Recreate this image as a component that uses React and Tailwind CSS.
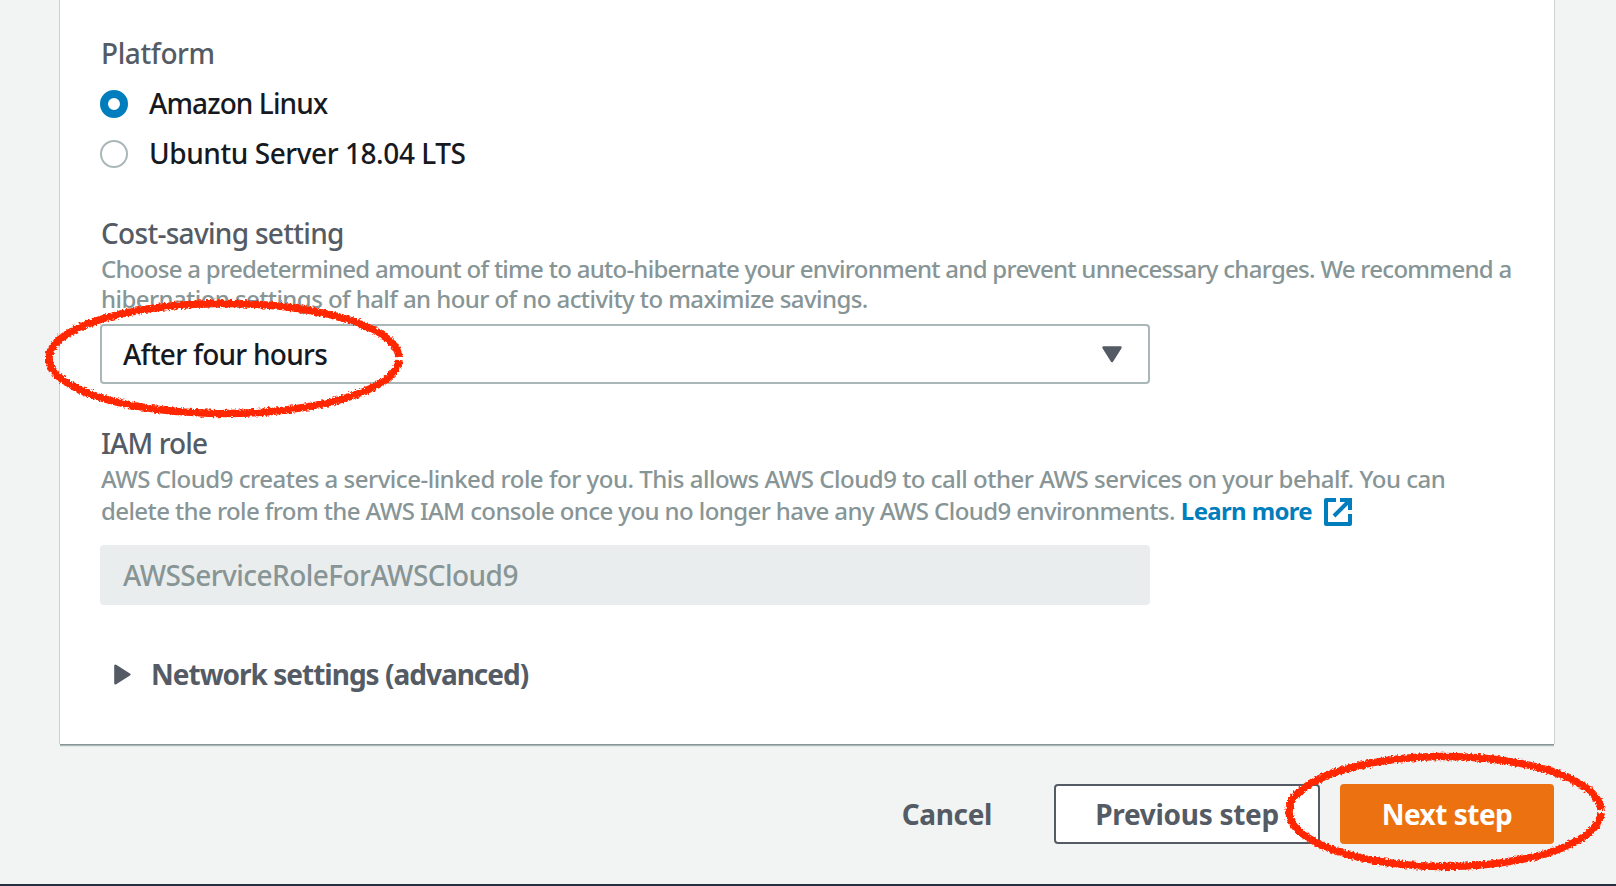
function Annotation({ className, w, h, seed }) {
  const id = "rough" + seed;
  return (
    <svg className={className} width={w} height={h} viewBox={`0 0 ${w} ${h}`} fill="none">
      <defs>
        <filter id={id} x="-5%" y="-10%" width="110%" height="120%">
          <feTurbulence type="fractalNoise" baseFrequency="0.45" numOctaves="2" seed={seed} result="n" />
          <feDisplacementMap in="SourceGraphic" in2="n" scale="5" xChannelSelector="R" yChannelSelector="G" />
        </filter>
      </defs>
      <path
        filter={`url(#${id})`}
        stroke="#ff2600"
        strokeWidth="7.5"
        d={`M${w - 10} ${h / 2 + 2}A${w / 2 - 10} ${h / 2 - 10} 0 1 1 ${w - 10} ${h / 2 - 1}`}
      />
    </svg>
  );
}

function Radio({ checked, children }) {
  return (
    <label className="flex h-[50px] items-center gap-[21px]">
      <span
        className={
          checked
            ? "size-7 rounded-full border-8 border-[#007dbc] bg-white"
            : "size-7 rounded-full border-2 border-[#aab7b8] bg-white"
        }
      />
      {children}
    </label>
  );
}

export default function App() {
  return (
    <div className="relative flex h-[886px] w-[1616px] flex-col overflow-hidden bg-[#f2f3f3] font-['Noto_Sans',sans-serif] text-[28px] leading-[40px] font-medium text-[#16191f]">
      <main className="mx-[60px] h-[744px] w-[1494px] shrink-0 bg-white pl-10 shadow-[0_1px_0_#879596,0_2px_0_#aab7b8,0_3px_0_#e3e6e6,-1px_0_0_#cdd1d1,1px_0_0_#cdd1d1]">
        <h3 className="pt-[33px] pl-px font-medium tracking-[-0.4px] text-[#545b64]">Platform</h3>
        <div className="mt-[6px] flex flex-col">
          <Radio checked>
            <span className="pb-0.5 tracking-[-0.9px]">Amazon Linux</span>
          </Radio>
          <Radio>
            <span className="pb-0.5 tracking-[-0.43px]">Ubuntu Server 18.04 LTS</span>
          </Radio>
        </div>

        <h3 className="mt-[34px] pl-px font-medium tracking-[-0.7px] text-[#545b64]">Cost-saving setting</h3>
        <div className="mt-px pl-px text-2xl leading-[30px] whitespace-nowrap text-[#879596]">
          <p className="tracking-[-0.72px]">
            Choose a predetermined amount of time to auto-hibernate your environment and prevent unnecessary charges. We recommend a
          </p>
          <p className="tracking-[-0.57px]">hibernation settings of half an hour of no activity to maximize savings.</p>
        </div>
        <div className="mt-[10px] flex h-[60px] w-[1050px] items-center justify-between rounded-[4px] border-2 border-[#aab7b8] bg-white pr-[26px] pl-[21px]">
          <span className="tracking-[-0.73px]">After four hours</span>
          <svg width="20" height="17" viewBox="0 0 20 17">
            <path d="M1.5 1.5h17L10 15z" fill="#545b64" stroke="#545b64" strokeWidth="2.4" strokeLinejoin="round" />
          </svg>
        </div>

        <h3 className="mt-[39px] pl-px font-medium tracking-[-0.9px] text-[#545b64]">IAM role</h3>
        <div className="pl-px text-2xl leading-8 whitespace-nowrap text-[#879596]">
          <p className="tracking-[-0.49px]">
            AWS Cloud9 creates a service-linked role for you. This allows AWS Cloud9 to call other AWS services on your behalf. You can
          </p>
          <p className="flex h-8 items-center">
            <span className="tracking-[-0.59px]">
              delete the role from the AWS IAM console once you no longer have any AWS Cloud9 environments.
            </span>
            <a className="ml-[6px] flex items-center gap-3 font-bold text-[#007dbc]">
              <span className="tracking-[-0.65px]">Learn more</span>
              <svg className="mt-0.5" width="28" height="28" viewBox="0 0 28 28" fill="none" stroke="#007dbc" strokeWidth="4">
                <path d="M12 2H2v24h24V16" strokeLinejoin="round" />
                <path d="M16 2h10v10M25 3L10 18" />
              </svg>
            </a>
          </p>
        </div>
        <div className="mt-[18px] flex h-[60px] w-[1050px] items-center rounded-[4px] bg-[#eaeded] pl-[23px] text-[#879596]">
          <span className="tracking-[-0.54px]">AWSServiceRoleForAWSCloud9</span>
        </div>
        <div className="mt-[49px] flex items-center gap-5 pl-[14px] font-bold text-[#545b64]">
          <svg width="17" height="21" viewBox="0 0 17 21">
            <path d="M1.5 1.8v17.4L15.3 10.5z" fill="#545b64" stroke="#545b64" strokeWidth="2.6" strokeLinejoin="round" />
          </svg>
          <span className="tracking-[-1px]">Network settings (advanced)</span>
        </div>
      </main>

      <div className="mt-10 flex h-[60px] w-[1554px] items-center justify-end gap-5 font-bold">
        <button className="px-[42px] tracking-[-0.35px] text-[#545b64]">Cancel</button>
        <button className="h-[60px] w-[266px] rounded-[4px] border-2 border-[#545b64] bg-white tracking-[-0.3px] text-[#545b64]">
          Previous step
        </button>
        <button className="h-[60px] w-[214px] rounded-[4px] bg-[#ec7211] tracking-[-0.5px] text-white">Next step</button>
      </div>
      <footer className="mt-10 h-[2px] bg-[#232f3e]" />

      <Annotation className="absolute top-[293px] left-[39px]" w={370} h={130} seed={3} />
      <Annotation className="absolute top-[746px] left-[1279px]" w={332} h={130} seed={8} />
    </div>
  );
}
